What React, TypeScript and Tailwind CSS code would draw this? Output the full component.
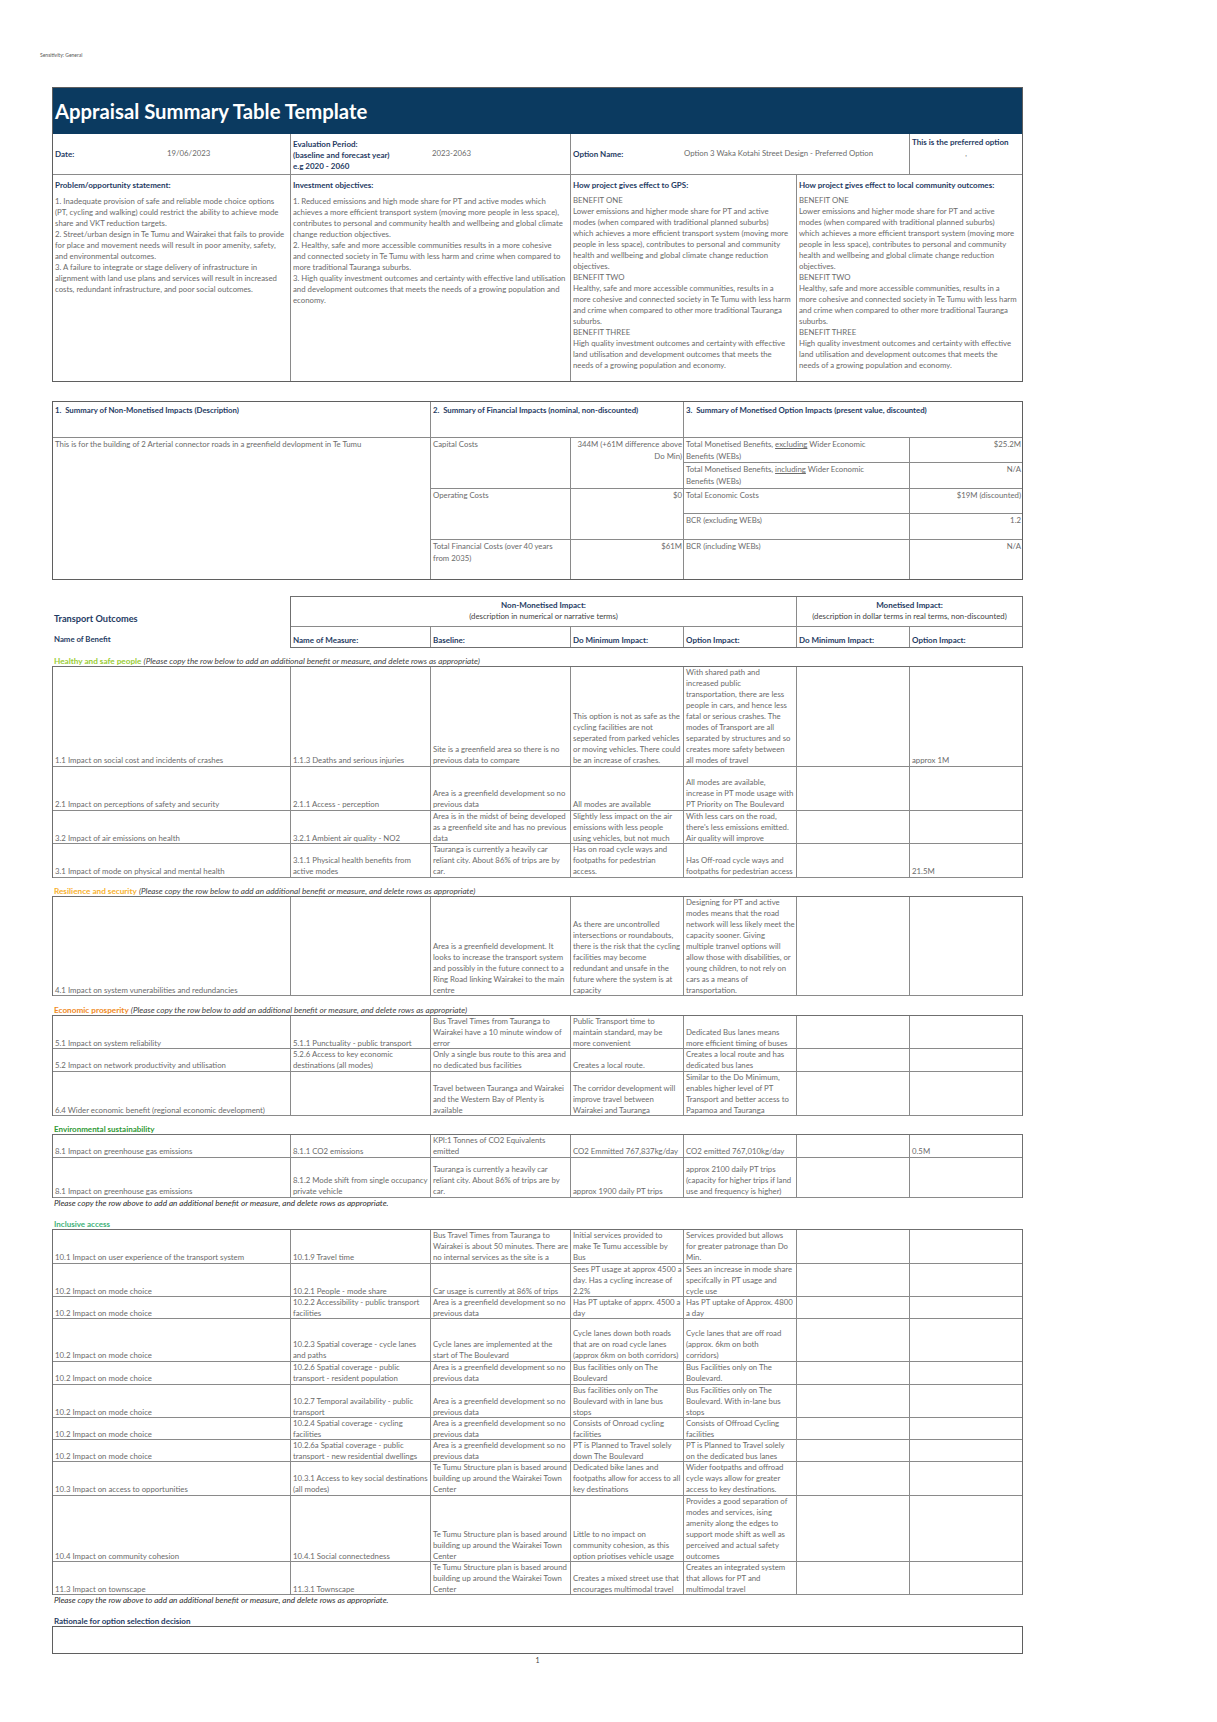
import React from 'react';

type Row = { h: string; cells: string[] };

const NAVY = 'text-[#1f3b63]';
const GRID = 'grid grid-cols-[238px_140px_140px_113px_113px_113px_112px]';

const healthy: Row[] = [
  {
    h: 'h-[100px]',
    cells: [
      '1.1 Impact on social cost and incidents of crashes',
      '1.1.3 Deaths and serious injuries',
      'Site is a greenfield area so there is no\nprevious data to compare',
      'This option is not as safe as the\ncycling facilities are not\nseperated from parked vehicles\nor moving vehicles. There could\nbe an increase of crashes.',
      'With shared path and\nincreased public\ntransportation, there are less\npeople in cars, and hence less\nfatal or serious crashes. The\nmodes of Transport are all\nseparated by structures and so\ncreates more safety between\nall modes of travel',
      '',
      'approx 1M',
    ],
  },
  {
    h: 'h-[44px]',
    cells: [
      '2.1 Impact on perceptions of safety and security',
      '2.1.1 Access - perception',
      'Area is a greenfield development so no\nprevious data',
      'All modes are available',
      'All modes are available,\nincrease in PT mode usage with\nPT Priority on The Boulevard',
      '',
      '',
    ],
  },
  {
    h: 'h-[33px]',
    cells: [
      '3.2 Impact of air emissions on health',
      '3.2.1 Ambient air quality - NO2',
      'Area is in the midst of being developed\nas a greenfield site and has no previous\ndata',
      'Slightly less impact on the air\nemissions with less people\nusing vehicles, but not much',
      "With less cars on the road,\nthere's less emissions emitted.\nAir quality will improve",
      '',
      '',
    ],
  },
  {
    h: 'h-[34px]',
    cells: [
      '3.1 Impact of mode on physical and mental health',
      '3.1.1 Physical health benefits from\nactive modes',
      'Tauranga is currently a heavily car\nreliant city. About 86% of trips are by\ncar.',
      'Has on road cycle ways and\nfootpaths for pedestrian\naccess.',
      'Has Off-road cycle ways and\nfootpaths for pedestrian access',
      '',
      '21.5M',
    ],
  },
];

const resilience: Row[] = [
  {
    h: 'h-[99px]',
    cells: [
      '4.1 Impact on system vunerabilities and redundancies',
      '',
      'Area is a greenfield development. It\nlooks to increase the transport system\nand possibly in the future connect to a\nRing Road linking Wairakei to the main\ncentre',
      'As there are uncontrolled\nintersections or roundabouts,\nthere is the risk that the cycling\nfacilities may become\nredundant and unsafe in the\nfuture where the system is at\ncapacity',
      'Designing for PT and active\nmodes means that the road\nnetwork will less likely meet the\ncapacity sooner. Giving\nmultiple tranvel options will\nallow those with disabilities, or\nyoung children, to not rely on\ncars as a means of\ntransportation.',
      '',
      '',
    ],
  },
];

const economic: Row[] = [
  {
    h: 'h-[33px]',
    cells: [
      '5.1 Impact on system reliability',
      '5.1.1 Punctuality - public transport',
      'Bus Travel Times from Tauranga to\nWairakei have a 10 minute window of\nerror',
      'Public Transport time to\nmaintain standard, may be\nmore convenient',
      'Dedicated Bus lanes means\nmore efficient timing of buses',
      '',
      '',
    ],
  },
  {
    h: 'h-[23px]',
    cells: [
      '5.2 Impact on network productivity and utilisation',
      '5.2.6 Access to key economic\ndestinations (all modes)',
      'Only a single bus route to this area and\nno dedicated bus facilities',
      'Creates a local route.',
      'Creates a local route and has\ndedicated bus lanes',
      '',
      '',
    ],
  },
  {
    h: 'h-[44px]',
    cells: [
      '6.4 Wider economic benefit (regional economic development)',
      '',
      'Travel between Tauranga and Wairakei\nand the Western Bay of Plenty is\navailable',
      'The corridor development will\nimprove travel between\nWairakei and Tauranga',
      'Similar to the Do Minimum,\nenables higher level of PT\nTransport and better access to\nPapamoa and Tauranga',
      '',
      '',
    ],
  },
];

const environmental: Row[] = [
  {
    h: 'h-[23px]',
    cells: [
      '8.1 Impact on greenhouse gas emissions',
      '8.1.1 CO2 emissions',
      'KPI:1 Tonnes of CO2 Equivalents\nemitted',
      'CO2 Emmitted 767,837kg/day',
      'CO2 emitted 767,010kg/day',
      '',
      '0.5M',
    ],
  },
  {
    h: 'h-[40px]',
    cells: [
      '8.1 Impact on greenhouse gas emissions',
      '8.1.2 Mode shift from single occupancy\nprivate vehicle',
      'Tauranga is currently a heavily car\nreliant city. About 86% of trips are by\ncar.',
      'approx 1900 daily PT trips',
      'approx 2100 daily PT trips\n(capacity for higher trips if land\nuse and frequency is higher)',
      '',
      '',
    ],
  },
];

const greenfield = 'Area is a greenfield development so no\nprevious data';
const structurePlan =
  'Te Tumu Structure plan is based around\nbuilding up around the Wairakei Town\nCenter';

const inclusive: Row[] = [
  {
    h: 'h-[34px]',
    cells: [
      '10.1 Impact on user experience of the transport system',
      '10.1.9 Travel time',
      'Bus Travel Times from Tauranga to\nWairakei is about 50 minutes. There are\nno internal services as the site is a',
      'Initial services provided to\nmake Te Tumu accessible by\nBus',
      'Services provided but allows\nfor greater patronage than Do\nMin.',
      '',
      '',
    ],
  },
  {
    h: 'h-[33px]',
    cells: [
      '10.2 Impact on mode choice',
      '10.2.1 People - mode share',
      'Car usage is currently at 86% of trips',
      'Sees PT usage at approx 4500 a\nday. Has a cycling increase of\n2.2%',
      'Sees an increase in mode share\nspecifcally in PT usage and\ncycle use',
      '',
      '',
    ],
  },
  {
    h: 'h-[22px]',
    cells: [
      '10.2 Impact on mode choice',
      '10.2.2 Accessibility - public transport\nfacilities',
      greenfield,
      'Has PT uptake of apprx. 4500 a\nday',
      'Has PT uptake of Approx. 4800\na day',
      '',
      '',
    ],
  },
  {
    h: 'h-[43px]',
    cells: [
      '10.2 Impact on mode choice',
      '10.2.3 Spatial coverage - cycle lanes\nand paths',
      'Cycle lanes are implemented at the\nstart of The Boulevard',
      'Cycle lanes down both roads\nthat are on road cycle lanes\n(approx 6km on both corridors)',
      'Cycle lanes that are off road\n(approx. 6km on both\ncorridors)',
      '',
      '',
    ],
  },
  {
    h: 'h-[23px]',
    cells: [
      '10.2 Impact on mode choice',
      '10.2.6 Spatial coverage - public\ntransport - resident population',
      greenfield,
      'Bus facilities only on The\nBoulevard',
      'Bus Facilities only on The\nBoulevard.',
      '',
      '',
    ],
  },
  {
    h: 'h-[33px]',
    cells: [
      '10.2 Impact on mode choice',
      '10.2.7 Temporal availability - public\ntransport',
      greenfield,
      'Bus facilities only on The\nBoulevard with in lane bus\nstops',
      'Bus Facilities only on The\nBoulevard. With in-lane bus\nstops',
      '',
      '',
    ],
  },
  {
    h: 'h-[22px]',
    cells: [
      '10.2 Impact on mode choice',
      '10.2.4 Spatial coverage - cycling\nfacilities',
      greenfield,
      'Consists of Onroad cycling\nfacilities',
      'Consists of Offroad Cycling\nfacilities',
      '',
      '',
    ],
  },
  {
    h: 'h-[22px]',
    cells: [
      '10.2 Impact on mode choice',
      '10.2.6a Spatial coverage - public\ntransport - new residential dwellings',
      greenfield,
      'PT is Planned to Travel solely\ndown The Boulevard',
      'PT is Planned to Travel solely\non the dedicated bus lanes',
      '',
      '',
    ],
  },
  {
    h: 'h-[34px]',
    cells: [
      '10.3 Impact on access to opportunities',
      '10.3.1 Access to key social destinations\n(all modes)',
      structurePlan,
      'Dedicated bike lanes and\nfootpaths allow for access to all\nkey destinations',
      'Wider footpaths and offroad\ncycle ways allow for greater\naccess to key destinations.',
      '',
      '',
    ],
  },
  {
    h: 'h-[66px]',
    cells: [
      '10.4 Impact on community cohesion',
      '10.4.1 Social connectedness',
      structurePlan,
      'Little to no impact on\ncommunity cohesion, as this\noption priotises vehicle usage',
      'Provides a good separation of\nmodes and services, ising\namenity along the edges to\nsupport mode shift as well as\nperceived and actual safety\noutcomes',
      '',
      '',
    ],
  },
  {
    h: 'h-[33px]',
    cells: [
      '11.3 Impact on townscape',
      '11.3.1 Townscape',
      structurePlan,
      'Creates a mixed street use that\nencourages multimodal travel',
      'Creates an integrated system\nthat allows for PT and\nmultimodal travel',
      '',
      '',
    ],
  },
];

const problemText = `1. Inadequate provision of safe and reliable mode choice options
(PT, cycling and walking) could restrict the ability to achieve mode
share and VKT reduction targets.
2. Street/urban design in Te Tumu and Wairakei that fails to provide
for place and movement needs will result in poor amenity, safety,
and environmental outcomes.
3. A failure to integrate or stage delivery of infrastructure in
alignment with land use plans and services will result in increased
costs, redundant infrastructure, and poor social outcomes.`;

const objectivesText = `1. Reduced emissions and high mode share for PT and active modes which
achieves a more efficient transport system (moving more people in less space),
contributes to personal and community health and wellbeing and global climate
change reduction objectives.
2. Healthy, safe and more accessible communities results in a more cohesive
and connected society in Te Tumu with less harm and crime when compared to
more traditional Tauranga suburbs.
3. High quality investment outcomes and certainty with effective land utilisation
and development outcomes that meets the needs of a growing population and
economy.`;

const benefitsText = `BENEFIT ONE
Lower emissions and higher mode share for PT and active
modes (when compared with traditional planned suburbs)
which achieves a more efficient transport system (moving more
people in less space), contributes to personal and community
health and wellbeing and global climate change reduction
objectives.
BENEFIT TWO
Healthy, safe and more accessible communities, results in a
more cohesive and connected society in Te Tumu with less harm
and crime when compared to other more traditional Tauranga
suburbs.
BENEFIT THREE
High quality investment outcomes and certainty with effective
land utilisation and development outcomes that meets the
needs of a growing population and economy.`;

function DataRow({ row }: { row: Row }) {
  return (
    <div className={`${GRID} ${row.h} border-b border-[#8a8a8a]`}>
      {row.cells.map((c, i) => (
        <div
          key={i}
          className={`flex flex-col justify-end whitespace-pre px-[2px] ${
            i < 6 ? 'border-r border-[#8a8a8a]' : ''
          }`}
        >
          {c}
        </div>
      ))}
    </div>
  );
}

function Rows({ rows }: { rows: Row[] }) {
  return (
    <div className="border-x border-t border-[#6f6f6f] text-[7.8px] leading-[11px] text-[#6b6b6b]">
      {rows.map((r, i) => (
        <DataRow key={i} row={r} />
      ))}
    </div>
  );
}

function Section({
  label,
  color,
  spacing,
  rows,
}: {
  label: string;
  color: string;
  spacing: string;
  rows: Row[];
}) {
  return (
    <>
      <div className={`${spacing} pl-[2px] text-[8.2px] leading-[10px]`}>
        <span className={`font-bold ${color}`}>{label}</span>{' '}
        <span className="italic text-[#3f3f3f]">
          (Please copy the row below to add an additional benefit or measure, and delete rows as
          appropriate)
        </span>
      </div>
      <Rows rows={rows} />
    </>
  );
}

function SimpleSection({
  label,
  color,
  spacing,
  rows,
}: {
  label: string;
  color: string;
  spacing: string;
  rows: Row[];
}) {
  return (
    <>
      <div className={`${spacing} pl-[2px] text-[8px] font-bold leading-[10px] ${color}`}>{label}</div>
      <Rows rows={rows} />
    </>
  );
}

function CopyNote() {
  return (
    <div className="pl-[2px] text-[8.2px] italic leading-[10px] text-[#2f2f2f]">
      Please copy the row above to add an additional benefit or measure, and delete rows as
      appropriate.
    </div>
  );
}

function FinRow({ label, value, h, last }: { label: string; value: string; h: string; last?: boolean }) {
  return (
    <div className={`grid grid-cols-[140px_113px] ${h} ${last ? '' : 'border-b border-[#8a8a8a]'}`}>
      <div className="whitespace-pre border-r border-[#8a8a8a] px-[2px] pt-[1px]">{label}</div>
      <div className="whitespace-pre border-r border-[#8a8a8a] pr-[1px] pt-[1px] text-right">
        {value}
      </div>
    </div>
  );
}

function MonRow({
  label,
  value,
  h,
  last,
}: {
  label: React.ReactNode;
  value: string;
  h: string;
  last?: boolean;
}) {
  return (
    <div className={`grid grid-cols-[226px_112px] ${h} ${last ? '' : 'border-b border-[#8a8a8a]'}`}>
      <div className="whitespace-pre border-r border-[#8a8a8a] px-[2px] pt-[1px]">{label}</div>
      <div className="pr-[1px] pt-[1px] text-right">{value}</div>
    </div>
  );
}

export default function App() {
  return (
    <div className="min-h-[1722px] w-[1217px] bg-white pb-[40px] font-['Lato','Carlito',sans-serif] text-[#6b6b6b]">
      <div className="pl-[40px] pt-[52px] text-[5px] leading-[6px] text-[#555555]">
        Sensitivity: General
      </div>

      <div className="ml-[52px] w-[971px]">
        {/* Header table */}
        <div className="mt-[29px] border border-[#5f5f5f]">
          <div className="flex h-[46px] items-center bg-[#0b3a60] pl-[2px] text-[20.3px] font-bold leading-none text-white">
            Appraisal Summary Table Template
          </div>
          <div className="grid h-[41px] grid-cols-[238px_280px_339px_112px] border-b border-[#8a8a8a] text-[7.8px]">
            <div className="flex items-center border-r border-[#8a8a8a] px-[2px]">
              <span className={`w-[112px] text-[8px] font-bold ${NAVY}`}>Date:</span>
              <span>19/06/2023</span>
            </div>
            <div className="flex items-center border-r border-[#8a8a8a] px-[2px] pt-[3px]">
              <div className={`w-[139px] text-[8px] font-bold leading-[11px] ${NAVY}`}>
                Evaluation Period:
                <br />
                (baseline and forecast year)
                <br />
                e.g 2020 - 2060
              </div>
              <span className="-mt-[3px]">2023-2063</span>
            </div>
            <div className="flex items-center border-r border-[#8a8a8a] px-[2px]">
              <span className={`w-[111px] text-[8px] font-bold ${NAVY}`}>Option Name:</span>
              <span>Option 3 Waka Kotahi Street Design - Preferred Option</span>
            </div>
            <div className="flex flex-col px-[2px] pt-[3px]">
              <span className={`text-[8px] font-bold leading-[10px] ${NAVY}`}>
                This is the preferred option
              </span>
              <span className="mt-[2px] text-center text-[7px] leading-[8px]">,</span>
            </div>
          </div>
          <div className="grid h-[206px] grid-cols-[238px_280px_226px_225px] text-[7.8px]">
            <div className="border-r border-[#8a8a8a] px-[2px] pt-[5px]">
              <div className={`text-[8px] font-bold leading-[10px] ${NAVY}`}>
                Problem/opportunity statement:
              </div>
              <div className="mt-[6px] whitespace-pre leading-[11px]">{problemText}</div>
            </div>
            <div className="border-r border-[#8a8a8a] px-[2px] pt-[5px]">
              <div className={`text-[8px] font-bold leading-[10px] ${NAVY}`}>
                Investment objectives:
              </div>
              <div className="mt-[6px] whitespace-pre leading-[11px]">{objectivesText}</div>
            </div>
            <div className="border-r border-[#8a8a8a] px-[2px] pt-[5px]">
              <div className={`text-[8px] font-bold leading-[10px] ${NAVY}`}>
                How project gives effect to GPS:
              </div>
              <div className="mt-[5px] whitespace-pre leading-[11px]">{benefitsText}</div>
            </div>
            <div className="px-[2px] pt-[5px]">
              <div className={`text-[8px] font-bold leading-[10px] ${NAVY}`}>
                How project gives effect to local community outcomes:
              </div>
              <div className="mt-[5px] whitespace-pre leading-[11px]">{benefitsText}</div>
            </div>
          </div>
        </div>

        {/* Summary of impacts */}
        <div className="mt-[19px] border border-[#5f5f5f] text-[7.8px] leading-[11.5px]">
          <div className={`grid h-[36px] grid-cols-[378px_253px_338px] border-b border-[#8a8a8a] font-bold ${NAVY}`}>
            <div className="border-r border-[#8a8a8a] px-[2px] pt-[3px]">
              1.&nbsp; Summary of Non-Monetised Impacts (Description)
            </div>
            <div className="border-r border-[#8a8a8a] px-[2px] pt-[3px]">
              2.&nbsp; Summary of Financial Impacts (nominal, non-discounted)
            </div>
            <div className="px-[2px] pt-[3px]">
              3.&nbsp; Summary of Monetised Option Impacts (present value, discounted)
            </div>
          </div>
          <div className="flex h-[141px]">
            <div className="w-[378px] border-r border-[#8a8a8a] px-[2px] pt-[1px]">
              This is for the building of 2 Arterial connector roads in a greenfield devlopment in Te Tumu
            </div>
            <div className="flex w-[253px] flex-col">
              <FinRow label="Capital Costs" value={'344M (+61M difference above\nDo Min)'} h="h-[51px]" />
              <FinRow label="Operating Costs" value="$0" h="h-[51px]" />
              <FinRow
                label={'Total Financial Costs (over 40 years\nfrom 2035)'}
                value="$61M"
                h="h-[39px]"
                last
              />
            </div>
            <div className="flex w-[338px] flex-col">
              <MonRow
                label={
                  <>
                    Total Monetised Benefits, <span className="underline">excluding</span> Wider Economic
                    {'\n'}Benefits (WEBs)
                  </>
                }
                value="$25.2M"
                h="h-[25px]"
              />
              <MonRow
                label={
                  <>
                    Total Monetised Benefits, <span className="underline">including</span> Wider Economic
                    {'\n'}Benefits (WEBs)
                  </>
                }
                value="N/A"
                h="h-[26px]"
              />
              <MonRow label="Total Economic Costs" value="$19M (discounted)" h="h-[25px]" />
              <MonRow label="BCR (excluding WEBs)" value="1.2" h="h-[26px]" />
              <MonRow label="BCR (including WEBs)" value="N/A" h="h-[39px]" last />
            </div>
          </div>
        </div>

        {/* Transport outcomes header */}
        <div className="mt-[16px] flex">
          <div className={`flex w-[238px] flex-col pl-[2px] font-bold ${NAVY}`}>
            <div className="mt-[17px] text-[9.2px] leading-[12px]">Transport Outcomes</div>
            <div className="mt-[9px] text-[7.8px] leading-[10px]">Name of Benefit</div>
          </div>
          <div className="w-[733px] border border-[#6f6f6f] text-[7.8px] leading-[11px]">
            <div className="grid h-[30px] grid-cols-[506px_225px] border-b border-[#8a8a8a] text-center">
              <div className="border-r border-[#8a8a8a] pt-[3px]">
                <div className={`text-[8px] font-bold ${NAVY}`}>Non-Monetised Impact:</div>
                <div className="text-[#3f3f3f]">(description in numerical or narrative terms)</div>
              </div>
              <div className="pt-[3px]">
                <div className={`text-[8px] font-bold ${NAVY}`}>Monetised Impact:</div>
                <div className="text-[#3f3f3f]">
                  (description in dollar terms in real terms, non-discounted)
                </div>
              </div>
            </div>
            <div className={`grid h-[20px] grid-cols-[140px_140px_113px_113px_113px_112px] text-[8px] font-bold ${NAVY}`}>
              {['Name of Measure:', 'Baseline:', 'Do Minimum Impact:', 'Option Impact:', 'Do Minimum Impact:', 'Option Impact:'].map(
                (t, i) => (
                  <div
                    key={i}
                    className={`flex flex-col justify-end px-[2px] pb-[1px] ${
                      i < 5 ? 'border-r border-[#8a8a8a]' : ''
                    }`}
                  >
                    {t}
                  </div>
                ),
              )}
            </div>
          </div>
        </div>

        <Section label="Healthy and safe people" color="text-[#99cc33]" spacing="mt-[8px]" rows={healthy} />
        <Section label="Resilience and security" color="text-[#f7b02e]" spacing="mt-[8px]" rows={resilience} />
        <Section label="Economic prosperity" color="text-[#f08a24]" spacing="mt-[9px]" rows={economic} />
        <SimpleSection
          label="Environmental sustainability"
          color="text-[#2f9a35]"
          spacing="mt-[8px]"
          rows={environmental}
        />
        <CopyNote />
        <SimpleSection label="Inclusive access" color="text-[#3fb27a]" spacing="mt-[11px]" rows={inclusive} />
        <CopyNote />

        <div className={`mt-[11px] pl-[2px] text-[8px] font-bold leading-[10px] ${NAVY}`}>
          Rationale for option selection decision
        </div>
        <div className="h-[28px] border border-[#5f5f5f]" />
        <div className="mt-[1px] text-center text-[7px] leading-[10px] text-[#3f3f3f]">1</div>
      </div>
    </div>
  );
}
